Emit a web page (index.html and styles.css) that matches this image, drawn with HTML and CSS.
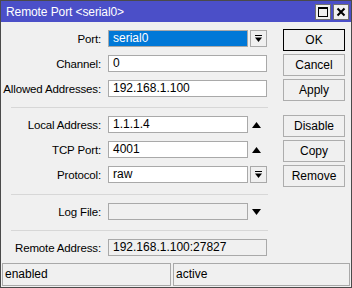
FILE: index.html
```html
<!DOCTYPE html>
<html>
<head>
<meta charset="utf-8">
<link rel="stylesheet" href="styles.css">
</head>
<body>
<div class="window">
  <div class="titlebar">
    <span class="title">Remote Port &lt;serial0&gt;</span>
    <div class="controls">
      <span class="ctl"><svg width="12" height="12" viewBox="0 0 12 12"><rect x="1.5" y="1.5" width="9" height="9" fill="none" stroke="#000" stroke-width="1"/><line x1="1" y1="2" x2="11" y2="2" stroke="#000" stroke-width="2"/></svg></span>
      <span class="ctl"><svg width="12" height="12" viewBox="0 0 12 12"><path d="M2.5 2.5 L9.5 9.5 M9.5 2.5 L2.5 9.5" stroke="#000" stroke-width="2"/></svg></span>
    </div>
  </div>
  <div class="content">
    <div class="form">
      <div class="row">
        <label class="lbl">Port:</label>
        <div class="field selected short">serial0</div>
        <span class="dd"><svg width="9" height="9" viewBox="0 0 9 9"><rect x="1" y="1" width="7" height="1" fill="#000"/><path d="M1 3.5 H8 L4.5 8 Z" fill="#000"/></svg></span>
      </div>
      <div class="row">
        <label class="lbl">Channel:</label>
        <div class="field">0</div>
      </div>
      <div class="row">
        <label class="lbl">Allowed Addresses:</label>
        <div class="field">192.168.1.100</div>
      </div>
      <div class="sep"></div>
      <div class="row">
        <label class="lbl">Local Address:</label>
        <div class="field short">1.1.1.4</div>
        <span class="arrow"><svg width="9" height="6" viewBox="0 0 9 6"><path d="M0 6 H9 L4.5 0 Z" fill="#000"/></svg></span>
      </div>
      <div class="row">
        <label class="lbl">TCP Port:</label>
        <div class="field short">4001</div>
        <span class="arrow"><svg width="9" height="6" viewBox="0 0 9 6"><path d="M0 6 H9 L4.5 0 Z" fill="#000"/></svg></span>
      </div>
      <div class="row">
        <label class="lbl">Protocol:</label>
        <div class="field short">raw</div>
        <span class="dd"><svg width="9" height="9" viewBox="0 0 9 9"><rect x="1" y="1" width="7" height="1" fill="#000"/><path d="M1 3.5 H8 L4.5 8 Z" fill="#000"/></svg></span>
      </div>
      <div class="sep sep2"></div>
      <div class="row">
        <label class="lbl">Log File:</label>
        <div class="field short disabled"></div>
        <span class="arrow"><svg width="9" height="6" viewBox="0 0 9 6"><path d="M0 0 H9 L4.5 6 Z" fill="#000"/></svg></span>
      </div>
      <div class="sep"></div>
      <div class="row">
        <label class="lbl">Remote Address:</label>
        <div class="field disabled">192.168.1.100:27827</div>
      </div>
    </div>
    <div class="buttons">
      <div class="btn default">OK</div>
      <div class="btn">Cancel</div>
      <div class="btn">Apply</div>
      <div class="btn gap">Disable</div>
      <div class="btn">Copy</div>
      <div class="btn">Remove</div>
    </div>
  </div>
  <div class="statusbar">
    <div class="cell left">enabled</div>
    <div class="cell right">active</div>
  </div>
</div>
</body>
</html>
```

FILE: styles.css
```css
* { box-sizing: border-box; }
html, body { margin: 0; padding: 0; }
body {
  width: 352px;
  height: 288px;
  font-family: "Liberation Sans", Arial, sans-serif;
  font-size: 12px;
  color: #000;
  background: #f0f0f0;
}
.window {
  width: 352px;
  height: 288px;
  border: 1px solid #4a4a4a;
  background: #f0f0f0;
  display: flex;
  flex-direction: column;
}
.titlebar {
  height: 21px;
  background: #4b4fc8;
  display: flex;
  align-items: center;
  justify-content: space-between;
  padding: 0 2px 0 5px;
}
.title {
  color: #fff;
  font-size: 12px;
  letter-spacing: -0.1px;
}
.controls {
  display: flex;
  gap: 2px;
}
.ctl {
  width: 16px;
  height: 16px;
  background: #f0f0f0;
  border: 1px solid #707070;
  display: flex;
  align-items: center;
  justify-content: center;
}
.content {
  display: flex;
  padding: 7px 0 0 0;
}
.form {
  width: 281px;
  display: flex;
  flex-direction: column;
  gap: 8px;
  padding-top: 1px;
}
.row {
  display: flex;
  align-items: center;
  height: 17px;
}
.lbl {
  width: 100px;
  text-align: right;
  margin-right: 7px;
  white-space: nowrap;
  font-size: 11.5px;
  letter-spacing: -0.15px;
}
.field {
  width: 159px;
  height: 17px;
  background: #fff;
  border: 1px solid #a9a9a9;
  padding: 0 4px;
  line-height: 15px;
  white-space: nowrap;
  overflow: hidden;
}
.field.short { width: 140px; }
.field.selected {
  background: #0078d7;
  color: #fff;
  border-color: #a9a9a9;
}
.field.disabled {
  background: #f0f0f0;
  border-color: #a9a9a9;
}
.dd {
  width: 17px;
  height: 17px;
  margin-left: 2px;
  border: 1px solid #a9a9a9;
  background: #f0f0f0;
  display: flex;
  align-items: center;
  justify-content: center;
}
.arrow {
  width: 12px;
  margin-left: 2px;
  display: flex;
  align-items: center;
  justify-content: center;
}
.sep {
  height: 1px;
  background: #d7d7d7;
  margin: 2px 14px 0 10px;
}
.sep.sep2 { margin-top: 3px; }
.buttons {
  display: flex;
  flex-direction: column;
  gap: 3px;
  padding-left: 1px;
}
.btn {
  width: 62px;
  height: 22px;
  border: 1px solid #adadad;
  background: #f0f0f0;
  display: flex;
  align-items: center;
  justify-content: center;
}
.btn.default { border-color: #000; }
.btn.gap { margin-top: 11px; }
.statusbar {
  margin-top: auto;
  margin-bottom: 1px;
  display: flex;
  gap: 2px;
  padding: 0 1px;
}
.cell {
  height: 23px;
  border: 1px solid #a9a9a9;
  padding: 0 2px;
  line-height: 21px;
}
.cell.left { width: 169px; }
.cell.right { flex: 1; }
```
